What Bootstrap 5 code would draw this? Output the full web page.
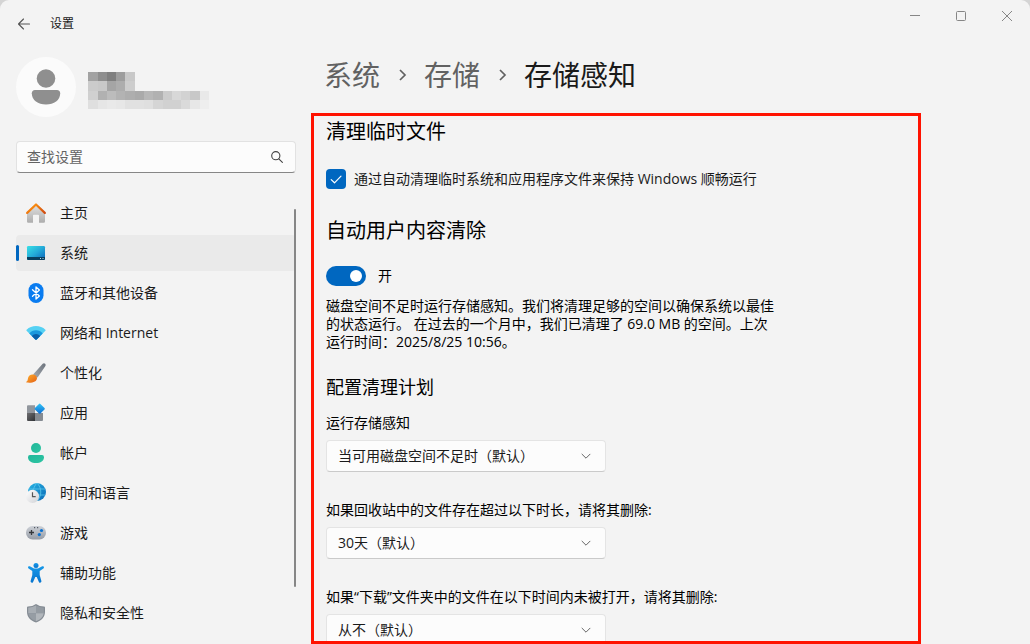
<!DOCTYPE html>
<html lang="zh-CN">
<head>
<meta charset="utf-8">
<meta name="viewport" content="width=device-width, initial-scale=1">
<title>设置</title>
<link rel="stylesheet" href="https://cdn.jsdelivr.net/npm/bootstrap@5.3.0/dist/css/bootstrap.min.css">
<style>
  :root { --accent: #0067c0; --surface: #f3f3f3; --field: #fcfcfc; --ink: #1a1a1a; }
  body { font-family: "Open Sans", "Noto Sans CJK SC", sans-serif; font-size: 14px; line-height: 20px; color: var(--ink); background: #d4d4d4; }
  .window { background: var(--surface); border-radius: 9px 9px 0 0; }
  .titlebar { height: 48px; padding-left: 16px; }
  .back-btn { width: 16px; height: 16px; }
  .app-title { font-size: 12px; line-height: 16px; margin-left: 18px; }
  .caption-btn { width: 46px; height: 32px; color: #868686; }
  .sidebar { width: 296px; padding-left: 16px; }
  .profile { padding: 9px 0 24px; gap: 12px; }
  .avatar { width: 60px; height: 60px; background: #fbfbfb; }
  .account-name { margin-top: 15px; }
  .search-field { height: 32px; font-size: 14px; background: var(--field); border: 1px solid #e2e2e2; border-bottom-color: #868686; border-radius: 4px; padding: 0 36px 2px 10px; color: var(--ink); }
  .search-field::placeholder { color: #636363; opacity: 1; }
  .search-btn { right: 11px; top: 8px; width: 16px; height: 16px; }
  .side-menu { margin-top: 22px; gap: 4px; }
  .side-menu .nav-link { height: 36px; padding: 0 10px; gap: 14px; color: var(--ink); border-radius: 4px; position: relative; }
  .side-menu .nav-link svg { width: 20px; height: 20px; flex: none; }
  .side-menu .nav-link.active { background: #eaeaea; }
  .side-menu .nav-link.active::before { content: ""; position: absolute; left: 0; top: 10px; width: 3px; height: 16px; border-radius: 2px; background: var(--accent); }
  .scroll-thumb { right: 0; top: 14px; width: 2px; height: 378px; border-radius: 1px; background: #868686; }
  .content { padding-left: 15px; }
  .trail { font-size: 28px; line-height: 36px; margin: 9px 0 20px; padding-left: 13px; gap: 16px; }
  .trail a { color: #616161; text-decoration: none; }
  .storage-panel { max-width: 610px; border: 3px solid #ff1200; padding: 2px 12px 0; color: #000; }
  .storage-panel h2 { font-size: 20px; line-height: 28px; font-weight: 400; margin: 0; }
  .storage-panel h3 { font-size: 18px; line-height: 24px; font-weight: 400; margin: 24px 0 14px; }
  .option-row { height: 20px; margin: 23px 0 28px; color: var(--ink); }
  .form-check-input.tick { width: 20px; height: 20px; border-radius: 4px; margin: 0; border: 0; }
  .form-check-input.tick:checked { background-color: var(--accent); background-size: 20px; background-image: url("data:image/svg+xml,%3Csvg xmlns='http://www.w3.org/2000/svg' viewBox='0 0 20 20'%3E%3Cpath d='M5.2 10.6 8.5 13.8 15 7.2' fill='none' stroke='white' stroke-width='1.2' stroke-linecap='round' stroke-linejoin='round'/%3E%3C/svg%3E"); }
  .form-switch.toggle-row { height: 20px; min-height: 0; padding: 0; margin: 21px 0 11px; gap: 12px; }
  .form-switch .form-check-input.toggle { width: 40px; height: 20px; margin: 0; border: 0; float: none; }
  .form-switch .form-check-input.toggle:checked { background-color: var(--accent); background-size: 20px; background-image: url("data:image/svg+xml,%3Csvg xmlns='http://www.w3.org/2000/svg' viewBox='0 0 20 20'%3E%3Ccircle cx='10' cy='10' r='6' fill='white'/%3E%3C/svg%3E"); }
  .status-text { line-height: 18px; margin: 0; }
  .field { margin-bottom: 28px; }
  .field label { margin-bottom: 7px; }
  .field .form-select { width: 280px; height: 32px; font-size: 14px; line-height: 20px; padding: 0 32px 0 11px; color: var(--ink); background-color: var(--field); border: 1px solid #e4e4e4; border-bottom-color: #cacaca; border-radius: 4px; background-position: right 13px center; background-size: 12px; background-image: url("data:image/svg+xml,%3Csvg xmlns='http://www.w3.org/2000/svg' viewBox='0 0 12 12'%3E%3Cpath d='M2 4.2 6 8.2 10 4.2' fill='none' stroke='%23666' stroke-width='1' stroke-linecap='round' stroke-linejoin='round'/%3E%3C/svg%3E"); }
</style>
</head>
<body>
<div class="window d-flex flex-column vh-100 overflow-hidden">
  <header class="titlebar d-flex align-items-center flex-shrink-0">
    <button class="back-btn btn p-0 border-0 d-flex" type="button" aria-label="返回">
      <svg width="16" height="16" viewBox="0 0 16 16" fill="none" stroke="#555" stroke-width="1.1" stroke-linecap="round" stroke-linejoin="round"><path d="M13.500 8H2.500M7.500 3 2.500 8l5 5"/></svg>
    </button>
    <span class="app-title">设置</span>
    <div class="d-flex ms-auto align-self-start">
      <button class="caption-btn btn p-0 border-0 d-flex align-items-center justify-content-center" type="button" aria-label="最小化"><svg width="12" height="12" viewBox="0 0 12 12" stroke="currentColor"><path d="M1 5.500h10"/></svg></button>
      <button class="caption-btn btn p-0 border-0 d-flex align-items-center justify-content-center" type="button" aria-label="最大化"><svg width="12" height="12" viewBox="0 0 12 12" fill="none" stroke="currentColor"><rect x="1.500" y="1.500" width="9" height="9" rx="1"/></svg></button>
      <button class="caption-btn btn p-0 border-0 d-flex align-items-center justify-content-center" type="button" aria-label="关闭"><svg width="12" height="12" viewBox="0 0 12 12" stroke="currentColor"><path d="M1 1l10 10M11 1 1 11"/></svg></button>
    </div>
  </header>

  <div class="d-flex flex-grow-1 overflow-hidden">
    <aside class="sidebar flex-shrink-0">
      <div class="profile d-flex align-items-start">
        <div class="avatar rounded-circle d-flex">
          <svg width="60" height="60" viewBox="0 0 60 60" fill="#8f8f8f"><circle cx="30" cy="21.500" r="9.300"/><path d="M19 33h22c2 0 3.200 1.500 3.200 3.300C44.200 43.500 38 47.500 30 47.500S15.800 43.500 15.800 36.300C15.800 34.500 17 33 19 33z"/></svg>
        </div>
        <svg class="account-name" width="121" height="37" viewBox="0 0 121 37" shape-rendering="crispEdges" aria-hidden="true">
          <g><rect width="10" height="9" fill="#a2a2a2"/><rect x="10" width="9" height="9" fill="#8e8e8e"/><rect x="19" width="9" height="9" fill="#7f7f7f"/><rect x="28" width="9" height="9" fill="#9d9d9d"/><rect x="37" width="10" height="9" fill="#c8c8c8"/></g>
          <g transform="translate(0 9)"><rect width="10" height="10" fill="#cbcbcb"/><rect x="10" width="9" height="10" fill="#c8c8c8"/><rect x="19" width="9" height="10" fill="#a5a5a5"/><rect x="28" width="9" height="10" fill="#adadad"/><rect x="37" width="10" height="10" fill="#cdcdcd"/></g>
          <g transform="translate(0 19)"><rect width="10" height="9" fill="#d0d0d0"/><rect x="10" width="9" height="9" fill="#b1b1b1"/><rect x="19" width="9" height="9" fill="#bcbcbc"/><rect x="28" width="9" height="9" fill="#b3b3b3"/><rect x="37" width="10" height="9" fill="#aeaeae"/><rect x="47" width="9" height="9" fill="#aaaaaa"/><rect x="56" width="9" height="9" fill="#b7b7b7"/><rect x="65" width="10" height="9" fill="#b1b1b1"/><rect x="75" width="9" height="9" fill="#cbcbcb"/><rect x="84" width="9" height="9" fill="#d8d8d8"/><rect x="93" width="9" height="9" fill="#d2d2d2"/><rect x="102" width="10" height="9" fill="#c8c8c8"/><rect x="112" width="9" height="9" fill="#e9e9e9"/></g>
          <g transform="translate(0 28)"><rect width="10" height="9" fill="#dfdfdf"/><rect x="10" width="9" height="9" fill="#e6e6e6"/><rect x="19" width="9" height="9" fill="#e9e9e9"/><rect x="28" width="9" height="9" fill="#e7e7e7"/><rect x="37" width="19" height="9" fill="#e1e1e1"/><rect x="56" width="9" height="9" fill="#dfdfdf"/><rect x="65" width="10" height="9" fill="#d5d5d5"/><rect x="75" width="18" height="9" fill="#d1d1d1"/><rect x="93" width="9" height="9" fill="#dadada"/><rect x="102" width="10" height="9" fill="#e7e7e7"/><rect x="112" width="9" height="9" fill="#eeeeee"/></g>
        </svg>
      </div>

      <form class="position-relative" role="search">
        <input class="search-field form-control" type="text" placeholder="查找设置" aria-label="查找设置">
        <button class="search-btn btn p-0 border-0 position-absolute d-flex" type="button" aria-label="搜索">
          <svg width="16" height="16" viewBox="0 0 16 16" fill="none" stroke="#444" stroke-width="1.100" stroke-linecap="round"><circle cx="6.800" cy="6.700" r="4.100"/><path d="M9.800 9.800 13.400 13.400"/></svg>
        </button>
      </form>

      <div class="position-relative">
      <nav class="side-menu nav flex-column">
        <a class="nav-link d-flex align-items-center" href="#">
          <svg viewBox="0 0 20 20"><defs><linearGradient id="wall" x2="0" y2="1"><stop stop-color="#e0e0e0"/><stop offset="1" stop-color="#adadad"/></linearGradient><linearGradient id="roof"><stop stop-color="#f07a10"/><stop offset=".5" stop-color="#f78a10"/><stop offset="1" stop-color="#cf4a12"/></linearGradient></defs><path d="M1 9.500 10 2l9 7.500V18.500q0 1.200-1.200 1.200H13V12.500q0-.8-.8-.8H7.800q-.8 0-.8.800v7.200H2.200Q1 19.700 1 18.500z" fill="url(#wall)"/><path d="M1.200 9.900 10 1.500l8.800 8.400" fill="none" stroke="url(#roof)" stroke-width="2.200" stroke-linecap="round" stroke-linejoin="round"/></svg>
          主页</a>
        <a class="nav-link active d-flex align-items-center" href="#" aria-current="page">
          <svg viewBox="0 0 20 20"><defs><linearGradient id="screen" x2="1" y2="1"><stop stop-color="#39e0e6"/><stop offset=".5" stop-color="#24aad8"/><stop offset="1" stop-color="#0a61b8"/></linearGradient></defs><rect x="1" y="3" width="18" height="14" rx="1.200" fill="url(#screen)"/><path d="M1 14h18v1.800q0 1.200-1.200 1.200H2.200Q1 17 1 15.800z" fill="#083f5f"/><path d="M14 15h1v1h-1zM16.500 15h1v1h-1z" fill="#b8dcea"/></svg>
          系统</a>
        <a class="nav-link d-flex align-items-center" href="#">
          <svg viewBox="0 0 20 20"><rect x="2.500" width="15" height="20" rx="7.500" fill="#0a7cf0"/><path d="M6.500 6.700 13.400 12.900 10 16V4l3.400 3.100-6.900 6.200" fill="none" stroke="#fff" stroke-width="1.300" stroke-linejoin="round" stroke-linecap="round"/></svg>
          蓝牙和其他设备</a>
        <a class="nav-link d-flex align-items-center" href="#">
          <svg viewBox="0 0 20 20"><path d="M.6 6.700Q4.500 3 10 3t9.400 3.700q.4.500 0 1L10.700 16.500q-.7.600-1.400 0L.6 7.700q-.4-.5 0-1z" fill="#55d1f3"/><path d="M3.300 10.400Q6 7.300 10 7.300t6.700 3.100l-6 6.100q-.7.600-1.400 0z" fill="#1a98dd"/><path d="M5.800 12.900Q7.500 11 10 11t4.200 1.900l-3.500 3.600q-.7.600-1.400 0z" fill="#0a5fa8"/></svg>
          网络和 Internet</a>
        <a class="nav-link d-flex align-items-center" href="#">
          <svg viewBox="0 0 20 20"><defs><linearGradient id="handle" x1="1" x2="0" y2="1"><stop stop-color="#6b727b"/><stop offset="1" stop-color="#a5abb2"/></linearGradient><linearGradient id="bristle" x2="1" y2="1"><stop stop-color="#ffb02c"/><stop offset="1" stop-color="#e35f15"/></linearGradient></defs><path d="M7.100 11.400 16.700.8c1.600-1.500 3.600.3 2.700 2.100L11.600 14.500q-2.900-.5-4.500-3.100z" fill="url(#handle)"/><path d="M6.800 11.500q3.600.2 4.200 3.500C11 18.700 6.500 20.200.8 19.600c-.7 0-.7-.7-.2-1 1.300-.7 1-2.200 1.500-3.900.8-2.300 2.700-3.400 4.700-3.200z" fill="url(#bristle)"/></svg>
          个性化</a>
        <a class="nav-link d-flex align-items-center" href="#">
          <svg viewBox="0 0 20 20"><defs><linearGradient id="tile" x2="1" y2="1"><stop stop-color="#6d6d70"/><stop offset="1" stop-color="#303236"/></linearGradient><linearGradient id="gem" x2="1" y2="1"><stop stop-color="#32c7f7"/><stop offset="1" stop-color="#0c69d3"/></linearGradient></defs><path d="M1 3.200q0-1 1-1h7V10H1z" fill="#91969d"/><path d="M1 10h8v8H2q-1 0-1-1z" fill="url(#tile)"/><path d="M9 10h8v7q0 1-1 1H9z" fill="#858b92"/><rect x="9.800" y="1.800" width="7.800" height="7.800" rx="1" transform="rotate(45 13.700 5.700)" fill="url(#gem)"/></svg>
          应用</a>
        <a class="nav-link d-flex align-items-center" href="#">
          <svg viewBox="0 0 20 20"><defs><linearGradient id="person" x2="1" y2="1"><stop stop-color="#20b79a"/><stop offset="1" stop-color="#2ec5a2"/></linearGradient></defs><circle cx="10" cy="5" r="5" fill="url(#person)"/><path d="M4 12h12q2 0 2 2.200C18 18 14.500 20 10 20s-8-2-8-5.800Q2 12 4 12z" fill="url(#person)"/></svg>
          帐户</a>
        <a class="nav-link d-flex align-items-center" href="#">
          <svg viewBox="0 0 20 20"><defs><linearGradient id="globe" x2="1" y2="1"><stop stop-color="#27b5e5"/><stop offset="1" stop-color="#0b69b5"/></linearGradient><linearGradient id="dial" x2="1" y2="1"><stop stop-color="#fff"/><stop offset="1" stop-color="#d0d2d6"/></linearGradient></defs><circle cx="11" cy="9" r="9" fill="url(#globe)"/><path d="M3 6h16M3 12h16M11 0C6 5 6 13 11 18M11 0c5 5 5 13 0 18" fill="none" stroke="#5cc8ec" stroke-width=".8"/><circle cx="6.500" cy="13.300" r="6.600" fill="url(#dial)"/><path d="M6.500 9.200v4.500h3.200" fill="none" stroke="#555" stroke-width="1.200"/></svg>
          时间和语言</a>
        <a class="nav-link d-flex align-items-center" href="#">
          <svg viewBox="0 0 20 20"><defs><linearGradient id="pad" x2="0" y2="1"><stop stop-color="#cdd1d7"/><stop offset="1" stop-color="#969ca6"/></linearGradient></defs><rect y="3" width="20" height="13.500" rx="6.500" fill="url(#pad)"/><path d="M5.500 7v5M3 9.500h5" stroke="#34373b" stroke-width="1.300"/><circle cx="15.500" cy="7.500" r="1.600" fill="#0b72d2"/><circle cx="13.300" cy="11.600" r="1.600" fill="#0b72d2"/><path d="M8 4h1.200v1.200H8zM11 4h1.200v1.200H11z" fill="#555b63"/></svg>
          游戏</a>
        <a class="nav-link d-flex align-items-center" href="#">
          <svg viewBox="0 0 20 20"><defs><linearGradient id="figure" x2="0" y2="1"><stop stop-color="#1698e8"/><stop offset="1" stop-color="#0875cf"/></linearGradient></defs><circle cx="10" cy="2.500" r="2.500" fill="url(#figure)"/><path d="M3.800 3.300 8 5.600h4l4.200-2.300c1.400-.6 2.500 1.200 1.200 2.100L13.700 8v4l1.700 6c.3 1.700-1.800 2.400-2.500.9L10.700 14H9.300l-2.200 4.900c-.7 1.500-2.800.8-2.500-.9l1.700-6V8L2.600 5.400c-1.300-.9-.2-2.700 1.200-2.100z" fill="url(#figure)"/></svg>
          辅助功能</a>
        <a class="nav-link d-flex align-items-center" href="#">
          <svg viewBox="0 0 20 20"><path d="M10 1q3.500 2.500 8 2.600 1 0 1 1V9c0 5.200-3.500 8.500-9 10.500C4.500 17.500 1 14.200 1 9V4.600q0-1 1-1Q6.500 3.500 10 1z" fill="#858c94"/><path d="M10 2.500v7.700H2.200V4.700Q6.500 4.600 10 2.500z" fill="#a8aeb4"/><path d="M10 2.500q3.500 2.100 7.800 2.200v5.500H10z" fill="#949ba2"/><path d="M2.300 10.200H10v8Q3 15.500 2.300 10.200z" fill="#969da4"/><path d="M10 10.200h7.700Q17 15.500 10 18.200z" fill="#b1b6bb"/></svg>
          隐私和安全性</a>
      </nav>
      <span class="scroll-thumb position-absolute"></span>
      </div>
    </aside>

    <main class="content d-flex flex-column flex-grow-1">
      <nav class="trail d-flex align-items-center flex-shrink-0" aria-label="路径">
        <a href="#">系统</a>
        <svg width="12" height="16" viewBox="0 0 12 16" fill="none" stroke="#616161" stroke-width="1.700"><path d="M4 3l5 5-5 5"/></svg>
        <a href="#">存储</a>
        <svg width="12" height="16" viewBox="0 0 12 16" fill="none" stroke="#616161" stroke-width="1.700"><path d="M4 3l5 5-5 5"/></svg>
        <span aria-current="page">存储感知</span>
      </nav>

      <section class="storage-panel flex-grow-1 overflow-hidden">
        <h2>清理临时文件</h2>
        <div class="option-row d-flex align-items-center gap-2">
          <input class="form-check-input tick" type="checkbox" id="autoClean" checked>
          <label for="autoClean">通过自动清理临时系统和应用程序文件来保持 Windows 顺畅运行</label>
        </div>

        <h2>自动用户内容清除</h2>
        <div class="form-check form-switch toggle-row d-flex align-items-center">
          <input class="form-check-input toggle" type="checkbox" role="switch" id="senseSwitch" checked>
          <label for="senseSwitch">开</label>
        </div>
        <p class="status-text">磁盘空间不足时运行存储感知。我们将清理足够的空间以确保系统以最佳<br>的状态运行。 在过去的一个月中，我们已清理了 69.0 MB 的空间。上次<br>运行时间：2025/8/25 10:56。</p>

        <h3>配置清理计划</h3>
        <div class="field">
          <label class="d-block" for="runSense">运行存储感知</label>
          <select class="form-select" id="runSense"><option>当可用磁盘空间不足时（默认）</option></select>
        </div>
        <div class="field">
          <label class="d-block" for="recycleBin">如果回收站中的文件存在超过以下时长，请将其删除:</label>
          <select class="form-select" id="recycleBin"><option>30天（默认）</option></select>
        </div>
        <div class="field">
          <label class="d-block" for="downloads">如果“下载”文件夹中的文件在以下时间内未被打开，请将其删除:</label>
          <select class="form-select" id="downloads"><option>从不（默认）</option></select>
        </div>
      </section>
    </main>
  </div>
</div>
<script src="https://cdn.jsdelivr.net/npm/bootstrap@5.3.0/dist/js/bootstrap.bundle.min.js"></script>
</body>
</html>
